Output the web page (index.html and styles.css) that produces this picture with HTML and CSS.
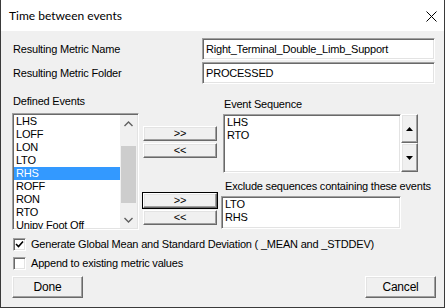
FILE: index.html
```html
<!DOCTYPE html>
<html lang="en">
<head>
  <meta charset="UTF-8">
  <title>Time between events</title>
  <link rel="stylesheet" href="styles.css">
</head>
<body>
  <div class="dialog" id="time_between_events">
    <div class="dialog__title">
      <span class="dialog__caption">Time between events</span>
      <svg class="dialog__close" width="11" height="11" viewBox="0 0 11 11">
        <path d="M0.5 0.5 L10.5 10.5 M10.5 0.5 L0.5 10.5" stroke="#000" stroke-width="1" fill="none"/>
      </svg>
    </div>
    <div class="dialog__client">
      <div class="field-row">
        <div class="ui-text">Resulting Metric Name</div>
        <div class="edit-box">Right_Terminal_Double_Limb_Support</div>
      </div>
      <div class="field-row field-row--second">
        <div class="ui-text">Resulting Metric Folder</div>
        <div class="edit-box">PROCESSED</div>
      </div>

      <div class="events">
        <div class="events__left">
          <div class="ui-text events__label">Defined Events</div>
          <div class="list-box list-box--defined">
            <div class="list-box__items">
              <div class="list-item">LHS</div>
              <div class="list-item">LOFF</div>
              <div class="list-item">LON</div>
              <div class="list-item">LTO</div>
              <div class="list-item list-item--selected">RHS</div>
              <div class="list-item">ROFF</div>
              <div class="list-item">RON</div>
              <div class="list-item">RTO</div>
              <div class="list-item">Unipy Foot Off</div>
            </div>
            <div class="vscroll">
              <div class="vscroll__arrow">
                <svg width="9" height="6" viewBox="0 0 9 6"><path d="M0.5 5 L4.5 1 L8.5 5" stroke="#606060" stroke-width="1.4" fill="none"/></svg>
              </div>
              <div class="vscroll__track">
                <div class="vscroll__thumb"></div>
              </div>
              <div class="vscroll__arrow">
                <svg width="9" height="6" viewBox="0 0 9 6"><path d="M0.5 1 L4.5 5 L8.5 1" stroke="#606060" stroke-width="1.4" fill="none"/></svg>
              </div>
            </div>
          </div>
        </div>

        <div class="events__middle">
          <button class="push-button push-button--move first-add">&gt;&gt;</button>
          <button class="push-button push-button--move">&lt;&lt;</button>
          <button class="push-button push-button--move push-button--default second-add">&gt;&gt;</button>
          <button class="push-button push-button--move">&lt;&lt;</button>
        </div>

        <div class="events__right">
          <div class="ui-text sequence__label">Event Sequence</div>
          <div class="sequence">
            <div class="list-box list-box--sequence">
              <div class="list-item">LHS</div>
              <div class="list-item">RTO</div>
            </div>
            <div class="spin">
              <button class="push-button spin__btn">
                <svg width="7" height="4" viewBox="0 0 7 4"><path d="M0 4 L3.5 0 L7 4 Z" fill="#000"/></svg>
              </button>
              <button class="push-button spin__btn">
                <svg width="7" height="4" viewBox="0 0 7 4"><path d="M0 0 L3.5 4 L7 0 Z" fill="#000"/></svg>
              </button>
            </div>
          </div>
          <div class="ui-text exclude__label">Exclude sequences containing these events</div>
          <div class="list-box list-box--exclude">
            <div class="list-item">LTO</div>
            <div class="list-item">RHS</div>
          </div>
        </div>
      </div>

      <div class="check-row check-row--first">
        <span class="check-box">
          <svg width="9" height="9" viewBox="0 0 9 9"><path d="M1 4 L3.5 6.5 L8 1.5" stroke="#000" stroke-width="1.6" fill="none"/></svg>
        </span>
        <span class="ui-text">Generate Global Mean and Standard Deviation ( _MEAN and _STDDEV)</span>
      </div>
      <div class="check-row">
        <span class="check-box"></span>
        <span class="ui-text">Append to existing metric values</span>
      </div>

      <div class="footer">
        <button class="push-button push-button--done">Done</button>
        <button class="push-button push-button--cancel">Cancel</button>
      </div>
    </div>
  </div>
</body>
</html>
```

FILE: styles.css
```css
/* General styles */
* {
  box-sizing: border-box;
}

body {
  margin: 0;
  background: #fff;
  font-family: "Liberation Sans", Arial, sans-serif;
  font-size: 11px;
  letter-spacing: -0.2px;
  color: #000;
}

#time_between_events {
  width: 445px;
  height: 308px;
  background: #f0f0f0;
  border: 1px solid #3a3a3a;
  border-top: 0;
  display: flex;
  flex-direction: column;
}

#time_between_events .dialog__title {
  height: 31px;
  background: #fff;
  display: flex;
  align-items: center;
  justify-content: space-between;
  padding: 0 7px 0 8px;
}

#time_between_events .dialog__caption {
  font-family: Lato, "Noto Sans", sans-serif;
  font-size: 12px;
  letter-spacing: 0;
}

#time_between_events .dialog__close {
  display: block;
  margin-top: 1px;
}

#time_between_events .dialog__client {
  padding: 7px 9px 0 11px;
}

#time_between_events .ui-text {
  line-height: 13px;
  white-space: nowrap;
}

/* top edit fields */
#time_between_events .field-row {
  display: flex;
  align-items: center;
  justify-content: space-between;
  height: 22px;
}

#time_between_events .field-row .ui-text {
  padding-left: 1px;
}

#time_between_events .field-row--second {
  margin-top: 2px;
}

#time_between_events .edit-box {
  width: 233px;
  height: 22px;
  background: #fff;
  border: 1px solid;
  border-color: #a0a0a0 #fff #fff #a0a0a0;
  box-shadow: inset 1px 1px 0 #696969, inset -1px -1px 0 #e3e3e3;
  padding: 1px 0 0 3px;
  line-height: 18px;
}

/* sunken boxes */
#time_between_events .list-box {
  background: #fff;
  border: 1px solid;
  border-color: #a0a0a0 #fff #fff #a0a0a0;
  box-shadow: inset 1px 1px 0 #696969, inset -1px -1px 0 #e3e3e3;
  padding: 1px;
  overflow: hidden;
}

#time_between_events .list-item {
  height: 13px;
  line-height: 13px;
  padding-left: 2px;
  white-space: nowrap;
}

#time_between_events .list-item--selected {
  background: #3399ff;
  color: #fff;
}

/* events area */
#time_between_events .events {
  display: flex;
  margin-top: 10px;
  height: 136px;
}

#time_between_events .events__left {
  width: 127px;
}

#time_between_events .events__label {
  padding: 1px 0 0 1px;
}

#time_between_events .list-box--defined {
  margin-top: 5px;
  height: 117px;
  display: flex;
}

#time_between_events .list-box__items {
  flex: 1;
}

#time_between_events .vscroll {
  width: 17px;
  display: flex;
  flex-direction: column;
  background: #f0f0f0;
}

#time_between_events .vscroll__arrow {
  height: 17px;
  display: flex;
  align-items: center;
  justify-content: center;
}

#time_between_events .vscroll__track {
  flex: 1;
  padding-top: 14px;
}

#time_between_events .vscroll__thumb {
  height: 57px;
  margin: 0 1px;
  background: #cdcdcd;
}

#time_between_events .events__middle {
  width: 74px;
  margin-left: 4px;
  display: flex;
  flex-direction: column;
}

#time_between_events .push-button {
  font-family: "Liberation Sans", Arial, sans-serif;
  font-size: 11px;
  letter-spacing: -0.2px;
  color: #000;
  background: #f0f0f0;
  border: 1px solid;
  border-color: #fff #696969 #696969 #fff;
  box-shadow: inset -1px -1px 0 #a0a0a0, inset 1px 1px 0 #e3e3e3;
  padding: 0;
  margin: 0;
  display: flex;
  align-items: center;
  justify-content: center;
}

#time_between_events .push-button--move {
  height: 15px;
  margin-top: 2px;
  line-height: 13px;
}

#time_between_events .first-add {
  margin-top: 32px;
}

#time_between_events .second-add {
  margin-top: 35px;
}

#time_between_events .push-button--default {
  outline: 1px solid #000;
  outline-offset: 0;
}

#time_between_events .events__right {
  margin-left: 4px;
  width: 197px;
}

#time_between_events .sequence__label {
  padding: 4px 0 0 3px;
}

#time_between_events .sequence {
  display: flex;
  margin-top: 3px;
  padding-left: 2px;
}

#time_between_events .list-box--sequence {
  width: 178px;
  height: 59px;
}

#time_between_events .spin {
  width: 17px;
  display: flex;
  flex-direction: column;
}

#time_between_events .spin__btn {
  height: 29px;
  width: 17px;
}

#time_between_events .exclude__label {
  margin-top: 7px;
  padding-left: 4px;
}

#time_between_events .list-box--exclude {
  margin-top: 3px;
  width: 180px;
  height: 33px;
}

/* check boxes */
#time_between_events .check-row {
  display: flex;
  align-items: center;
  height: 13px;
  margin-top: 6px;
  padding-left: 1px;
}

#time_between_events .check-row--first {
  margin-top: 8px;
}

#time_between_events .check-box {
  width: 13px;
  height: 13px;
  background: #fff;
  border: 1px solid;
  border-color: #a0a0a0 #fff #fff #a0a0a0;
  box-shadow: inset 1px 1px 0 #696969, inset -1px -1px 0 #e3e3e3;
  margin-right: 5px;
  display: flex;
  align-items: center;
  justify-content: center;
}

#time_between_events .footer {
  display: flex;
  justify-content: space-between;
  margin-top: 6px;
}

#time_between_events .push-button--done,
#time_between_events .push-button--cancel {
  height: 22px;
  width: 71px;
  font-size: 12px;
}

#time_between_events .push-button--cancel {
  margin-right: -1px;
}
```
